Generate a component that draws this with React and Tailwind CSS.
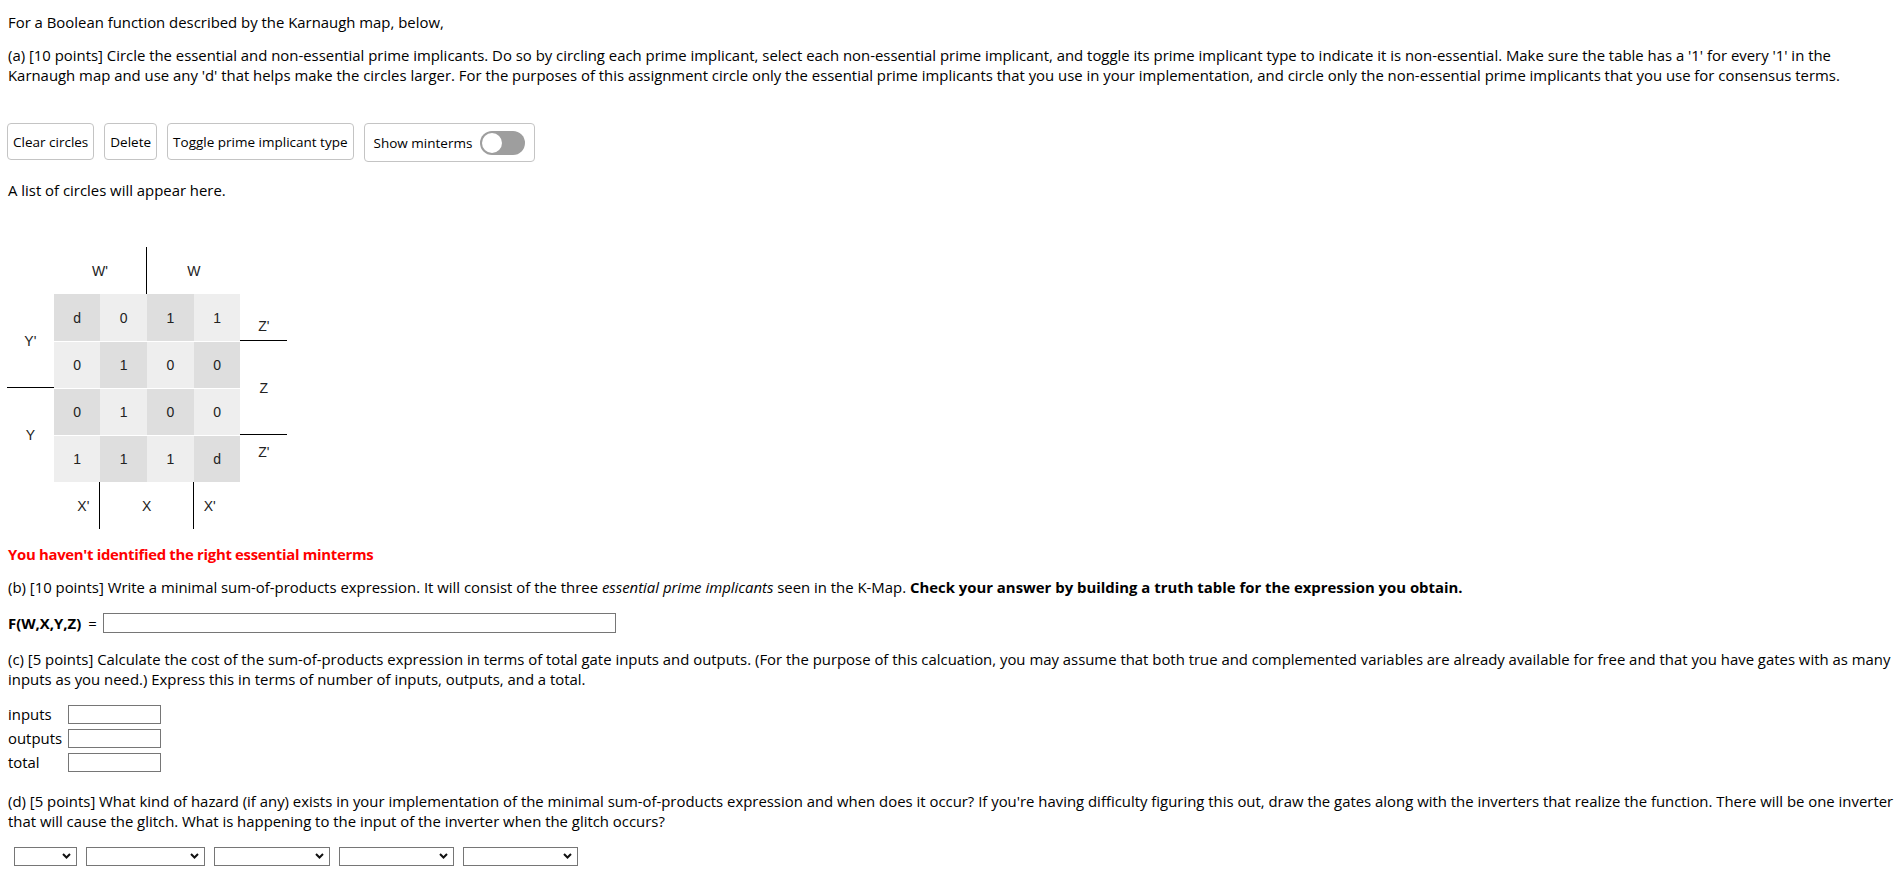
import React from "react";

const cells = [
  ["d", "0", "1", "1"],
  ["0", "1", "0", "0"],
  ["0", "1", "0", "0"],
  ["1", "1", "1", "d"],
];

function Chevron() {
  return (
    <svg width="9" height="6" viewBox="0 0 9 6" className="absolute right-[6px] top-[6px] pointer-events-none">
      <path d="M1 1 L4.5 4.5 L8 1" fill="none" stroke="#111" strokeWidth="2" />
    </svg>
  );
}

function Select({ w }) {
  return (
    <div className={`relative ${w} h-[19px]`}>
      <select className="appearance-none w-full h-full border border-[#767676] bg-white rounded-none"></select>
      <Chevron />
    </div>
  );
}

function KMap() {
  const col = ["col-start-2", "col-start-3", "col-start-4", "col-start-5"];
  const row = ["row-start-2", "row-start-3", "row-start-4", "row-start-5"];
  return (
    <div className="grid grid-cols-[repeat(6,46.7px)] grid-rows-[repeat(6,47px)] [font-family:'Liberation_Sans',Arial,sans-serif] text-[14px] leading-[16px] text-[#222] ml-[-1px]">
      <div className="col-start-2 col-span-2 row-start-1 border-r border-black flex items-center justify-center">W'</div>
      <div className="col-start-4 col-span-2 row-start-1 flex items-center justify-center">W</div>
      <div className="col-start-1 row-start-2 row-span-2 border-b border-black flex items-center justify-center">Y'</div>
      <div className="col-start-1 row-start-4 row-span-2 flex items-center justify-center">Y</div>
      <div className="col-start-6 row-start-2 border-b border-black flex items-end justify-center pb-[6px]">Z'</div>
      <div className="col-start-6 row-start-3 row-span-2 border-b border-black flex items-center justify-center">Z</div>
      <div className="col-start-6 row-start-5 flex items-start justify-center pt-[9px]">Z'</div>
      <div className="col-start-2 row-start-6 border-r border-black flex items-center justify-end pr-[10px]">X'</div>
      <div className="col-start-3 col-span-2 row-start-6 border-r border-black flex items-center justify-center">X</div>
      <div className="col-start-5 row-start-6 flex items-center justify-start pl-[10px]">X'</div>
      {cells.map((r, ri) =>
        r.map((v, ci) => (
          <div
            key={`${ri}-${ci}`}
            className={`${col[ci]} ${row[ri]} ${(ri + ci) % 2 === 0 ? "bg-[#dedede]" : "bg-[#eeeeee]"} ${ri > 0 ? "border-t border-white" : ""} flex items-center justify-center`}
          >
            {v}
          </div>
        ))
      )}
    </div>
  );
}

export default function App() {
  return (
    <div className="w-[1901px] min-h-[890px] bg-white text-black [font-family:'Open_Sans',sans-serif] text-[14.9px] leading-[20px] pl-[8px] pr-[2px] pt-[12px] pb-[20px]">
      <p>For a Boolean function described by the Karnaugh map, below,</p>
      <p className="mt-[13px]">
        (a) [10 points] Circle the essential and non-essential prime implicants. Do so by circling each prime implicant, select each non-essential prime implicant, and toggle its prime implicant type to indicate it is non-essential. Make sure the table has a '1' for every '1' in the Karnaugh map and use any 'd' that helps make the circles larger. For the purposes of this assignment circle only the essential prime implicants that you use in your implementation, and circle only the non-essential prime implicants that you use for consensus terms.
      </p>
      <div className="mt-[38px] ml-[-1px] flex items-start gap-[10px] text-[13.5px]">
        <button className="h-[37px] px-[5px] border border-[#c4c4c4] rounded-[4px] bg-white">Clear circles</button>
        <button className="h-[37px] px-[5px] border border-[#c4c4c4] rounded-[4px] bg-white">Delete</button>
        <button className="h-[37px] px-[5px] border border-[#c4c4c4] rounded-[4px] bg-white">Toggle prime implicant type</button>
        <div className="h-[39px] pl-[9px] pr-[9px] border border-[#c4c4c4] rounded-[4px] bg-white flex items-center gap-[8px]">
          <span>Show minterms</span>
          <div className="w-[45px] h-[24px] rounded-full bg-[#9e9e9e] p-[2px] flex items-center">
            <div className="w-[20px] h-[20px] rounded-full bg-white"></div>
          </div>
        </div>
      </div>
      <p className="mt-[18px]">A list of circles will appear here.</p>
      <div className="mt-[47px]">
        <KMap />
      </div>
      <p className="mt-[15px] font-bold text-[#ff0000] tracking-[-0.3px]">You haven't identified the right essential minterms</p>
      <p className="mt-[13px]">
        (b) [10 points] Write a minimal sum-of-products expression. It will consist of the three <i>essential prime implicants</i> seen in the K-Map. <b>Check your answer by building a truth table for the expression you obtain.</b>
      </p>
      <div className="mt-[16px] flex items-center h-[20px]">
        <b>F(W,X,Y,Z)</b>
        <span className="ml-[7px]">=</span>
        <input className="ml-[6px] w-[513px] h-[20px] border border-[#767676] bg-white" />
      </div>
      <p className="mt-[16px]">
        (c) [5 points] Calculate the cost of the sum-of-products expression in terms of total gate inputs and outputs. (For the purpose of this calcuation, you may assume that both true and complemented variables are already available for free and that you have gates with as many inputs as you need.) Express this in terms of number of inputs, outputs, and a total.
      </p>
      <div className="mt-[16px] grid grid-cols-[60px_93px] gap-y-[5px]">
        <span className="leading-[19px]">inputs</span>
        <input className="h-[19px] border border-[#767676] bg-white" />
        <span className="leading-[19px]">outputs</span>
        <input className="h-[19px] border border-[#767676] bg-white" />
        <span className="leading-[19px]">total</span>
        <input className="h-[19px] border border-[#767676] bg-white" />
      </div>
      <p className="mt-[19px]">
        (d) [5 points] What kind of hazard (if any) exists in your implementation of the minimal sum-of-products expression and when does it occur? If you're having difficulty figuring this out, draw the gates along with the inverters that realize the function. There will be one inverter that will cause the glitch. What is happening to the input of the inverter when the glitch occurs?
      </p>
      <div className="mt-[16px] ml-[6px] flex gap-[9px]">
        <Select w="w-[63px]" />
        <Select w="w-[119px]" />
        <Select w="w-[116px]" />
        <Select w="w-[115px]" />
        <Select w="w-[115px]" />
      </div>
    </div>
  );
}
